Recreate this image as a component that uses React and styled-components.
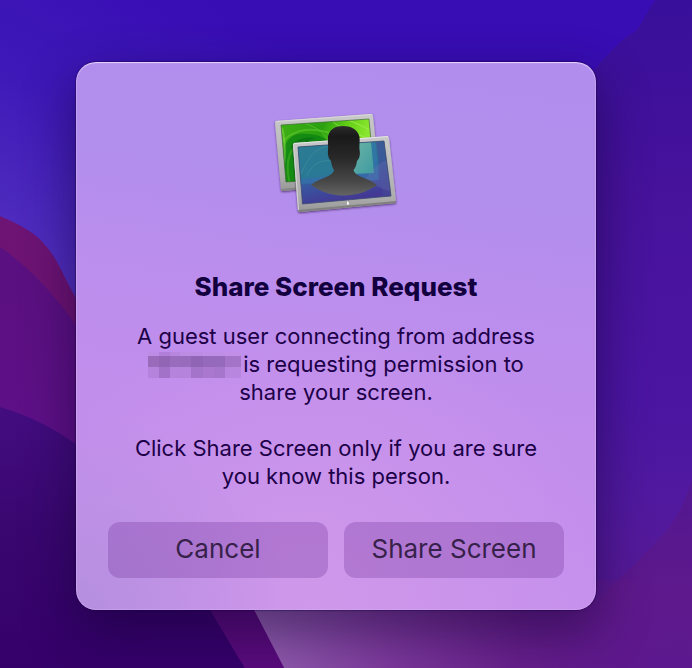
import React from 'react'
import styled, { createGlobalStyle } from 'styled-components'

const GlobalStyle = createGlobalStyle`
  * {
    box-sizing: border-box;
  }
  body {
    margin: 0;
    background: #35006a;
    font-family: Inter, 'Liberation Sans', sans-serif;
  }
`

const Desktop = styled.main`
  min-height: 100vh;
  padding: 62px 96px 58px 76px;
  position: relative;
  overflow: hidden;
`

const WallpaperSvg = styled.svg`
  position: absolute;
  inset: 0;
  width: 100%;
  height: 100%;
`

const Dialog = styled.section`
  position: relative;
  max-width: 520px;
  margin: 0 auto;
  padding: 32px;
  display: flex;
  flex-direction: column;
  align-items: center;
  border-radius: 20px;
  color: #1c0048;
  text-align: center;
  background:
    radial-gradient(circle at 0 100%, #b58fe0 0, #b58fe000 210px),
    radial-gradient(circle at 45% 100%, #cf98ea 0, #cf98ea00 300px),
    linear-gradient(188deg, #b18eed 0%, #b28eed 25%, #bb8eed 42%, #c28eec 65%, #c791ed 100%);
  box-shadow:
    inset 0 1px 1px #e6d4fa,
    inset 0 0 1px 1px #d3aff580,
    0 0 1px 1px #16003a60,
    0 20px 50px 4px #1000307a;
`

const ScreensIcon = styled.svg`
  width: 128px;
  height: 128px;
  margin-bottom: 49px;
`

const Title = styled.h1`
  margin: 0 0 19px;
  font-size: 26px;
  line-height: 32px;
  font-weight: 800;
  color: #12003f;
`

const Message = styled.p`
  max-width: 416px;
  margin: 0 0 28px;
  font-size: 22px;
  line-height: 28px;
`

const LastMessage = styled(Message)`
  margin-bottom: 32px;
`

const MosaicSvg = styled.svg`
  width: 93px;
  height: 28px;
  margin-right: 2px;
  vertical-align: top;
`

const Actions = styled.div`
  width: 100%;
  display: grid;
  grid-template-columns: 1fr 1fr;
  gap: 16px;
`

const Button = styled.button`
  height: 56px;
  padding: 0 0 2px;
  border: 0;
  border-radius: 12px;
  background: #6d2b9447;
  color: #37214a;
  font-family: inherit;
  font-size: 26px;
  line-height: 32px;
  cursor: pointer;
`

function Wallpaper() {
  return (
    <WallpaperSvg viewBox="0 0 692 668" preserveAspectRatio="none" aria-hidden="true">
      <defs>
        <linearGradient id="sky" x1="0.3" y1="0" x2="0" y2="0.5">
          <stop offset="0" stopColor="#380db4" />
          <stop offset="0.4" stopColor="#3e18b8" />
          <stop offset="1" stopColor="#5a3ac2" />
        </linearGradient>
        <linearGradient id="right" x1="0" y1="0" x2="0" y2="1">
          <stop offset="0" stopColor="#380f9a" />
          <stop offset="0.3" stopColor="#47129c" />
          <stop offset="0.6" stopColor="#4b15a2" />
          <stop offset="0.75" stopColor="#51199f" />
          <stop offset="1" stopColor="#5c1a90" />
        </linearGradient>
        <linearGradient id="curve" x1="0" y1="0" x2="0" y2="1">
          <stop offset="0" stopColor="#53168a" stopOpacity="0.7" />
          <stop offset="0.6" stopColor="#5f198c" stopOpacity="0.9" />
          <stop offset="1" stopColor="#5c188e" />
        </linearGradient>
        <linearGradient id="hillBack" x1="0" y1="0" x2="0" y2="1">
          <stop offset="0" stopColor="#6d1474" />
          <stop offset="1" stopColor="#701070" />
        </linearGradient>
        <linearGradient id="hillMid" x1="0" y1="0" x2="0" y2="1">
          <stop offset="0" stopColor="#5a1080" />
          <stop offset="0.5" stopColor="#5f1088" />
          <stop offset="1" stopColor="#68107c" />
        </linearGradient>
        <linearGradient id="hillFront" x1="0" y1="0" x2="0" y2="1">
          <stop offset="0" stopColor="#430d80" />
          <stop offset="0.5" stopColor="#39066f" />
          <stop offset="1" stopColor="#35006a" />
        </linearGradient>
        <linearGradient id="slope" gradientUnits="userSpaceOnUse" x1="254" y1="0" x2="692" y2="0">
          <stop offset="0" stopColor="#9360b0" />
          <stop offset="0.3" stopColor="#7d3a9c" />
          <stop offset="0.6" stopColor="#68208a" stopOpacity="0.9" />
          <stop offset="0.85" stopColor="#62198a" stopOpacity="0.3" />
          <stop offset="1" stopColor="#58178f" stopOpacity="0" />
        </linearGradient>
      </defs>
      <rect width="692" height="668" fill="url(#sky)" />
      <path d="M656 0C648 9 643 22 636 31C621 39 609 53 596 68L380 300V668H692V0Z" fill="url(#right)" />
      <path d="M692 480C684 505 675 522 663 534C645 556 620 578 596 600L540 600V668H692Z" fill="url(#curve)" />
      <path d="M0 216C21 225 37 234 46 246C59 261 66 282 76 298L240 560L300 668H0Z" fill="url(#hillBack)" />
      <path d="M0 247C28 266 53 293 76 325L210 520L300 668H0Z" fill="url(#hillMid)" />
      <path d="M0 407C28 415 53 428 76 444C145 490 181 561 245 668H0Z" fill="url(#hillFront)" />
      <path d="M240 580H692V668H284L254 610Z" fill="url(#slope)" />
      <path d="M180 540H218L254 610L284 668H245L210 610Z" fill="#590b7c" />
    </WallpaperSvg>
  )
}

function Screens() {
  return (
    <ScreensIcon viewBox="272 94 128 128" aria-hidden="true">
      <defs>
        <linearGradient id="frame" x1="0" y1="0" x2="0" y2="1">
          <stop offset="0" stopColor="#c9c9c9" />
          <stop offset="0.8" stopColor="#adadad" />
          <stop offset="1" stopColor="#979797" />
        </linearGradient>
        <linearGradient id="green" x1="0" y1="0" x2="1" y2="0.2">
          <stop offset="0" stopColor="#3fb014" />
          <stop offset="0.45" stopColor="#2aa010" />
          <stop offset="0.7" stopColor="#62cf16" />
          <stop offset="1" stopColor="#94ec35" />
        </linearGradient>
        <linearGradient id="blue" x1="0" y1="0" x2="0.3" y2="1">
          <stop offset="0" stopColor="#377c91" />
          <stop offset="0.5" stopColor="#28739a" />
          <stop offset="0.7" stopColor="#39559f" />
          <stop offset="1" stopColor="#433895" />
        </linearGradient>
        <linearGradient id="teal" x1="0" y1="0" x2="1" y2="1">
          <stop offset="0" stopColor="#6bb5a5" />
          <stop offset="1" stopColor="#409aa1" />
        </linearGradient>
        <linearGradient id="person" x1="0" y1="0" x2="0" y2="1">
          <stop offset="0" stopColor="#2b2b2b" />
          <stop offset="0.15" stopColor="#191919" />
          <stop offset="0.45" stopColor="#282828" />
          <stop offset="0.8" stopColor="#484848" />
          <stop offset="1" stopColor="#646464" />
        </linearGradient>
        <clipPath id="greenClip">
          <path d="M281 125L369 119L374 176L286 182Z" />
        </clipPath>
        <filter id="drop" x="-10%" y="-10%" width="120%" height="125%">
          <feDropShadow dx="0" dy="1" stdDeviation="1" floodColor="#1b0636" floodOpacity="0.6" />
        </filter>
      </defs>

      <g filter="url(#drop)">
        <path d="M276 121L371 114Q373 114 373 116L380 182L282 191Q281 191 281 189L275 123Q275 121 276 121Z" fill="url(#frame)" />
        <path d="M281 189L380 180V182L282 191Z" fill="#858585" />
        <path d="M276 121.500L372 114.500" stroke="#d9d9d9" fill="none" />
      </g>
      <path d="M281 125L369 119L374 176L286 182Z" fill="url(#green)" />
      <g clipPath="url(#greenClip)" fill="none">
        <path d="M283 160C282 139 294 131 309 134C321 135 328 139 331 144L327 183H285Z" fill="#0b8213" opacity="0.75" />
        <path d="M291 150C293 140 303 136 316 138C307 141 300 145 298 158Z" fill="#076b12" opacity="0.6" />
        <path d="M290 185C284 160 290 144 305 142" stroke="#4db827" strokeWidth="2" opacity="0.5" />
        <path d="M281 143C292 131 305 126 330 133" stroke="#6fd23a" strokeWidth="2" opacity="0.45" />
        <path d="M304 123C318 128 327 134 330 146" stroke="#69c93b" opacity="0.6" />
        <path d="M331 119C334 124 340 128 370 139M337 117C348 119 358 124 370 130" stroke="#b3f367" opacity="0.6" />
        <path d="M281 183C287 155 285 139 282 128" stroke="#8fdf4c" strokeWidth="2" opacity="0.5" />
      </g>
      <path d="M281 125L369 119L374 176L286 182Z" fill="none" stroke="#42683d" strokeWidth="0.700" />

      <g filter="url(#drop)">
        <path d="M294 143L387 136.500Q389 136 389 138L396 201Q396 203 394 203L300 212Q298 212 298 210L293 145Q293 143 294 143Z" fill="url(#frame)" />
        <path d="M298 210L396 201V203L299 212Z" fill="#808080" />
        <path d="M294 143.500L388 136.500" stroke="#e6e6e6" fill="none" />
        <path d="M293.500 144L298.500 210" stroke="#d6d6d6" fill="none" />
      </g>
      <path d="M298 147L384 141L391 196L302.500 204Z" fill="url(#blue)" />
      <path d="M298 147L375 142L379 180L301 184Z" fill="#3578ae" opacity="0.55" />
      <path d="M298 147L371 142L374 172L301 179Z" fill="#277e88" opacity="0.55" />
      <path d="M351 143.500L371 142L374 173L352 174Z" fill="url(#teal)" />
      <path d="M376 142L384 141L391 196L383 197Z" fill="#454a98" opacity="0.6" />
      <path d="M301 174C311 151 318 148 330 146M307 175C314 162 321 160 333 161" stroke="#53a1a5" fill="none" opacity="0.35" />
      <path d="M364 181C371 170 378 163 387 160L391 192Z" fill="#8088c0" opacity="0.2" />
      <path d="M298 147L384 141L391 196L302.500 204Z" fill="none" stroke="#3a4a70" strokeWidth="0.800" />

      <path
        d="M343 126C336 126 329 129 328 137C327.500 142 328.500 146 328 150C327.500 154 328.500 159 331 161C331.500 165 332.500 168 334 170C333 177 319 178 311 185C322 193 333 195.500 344 195.500C356 195.500 367 192 377 185C369 178 355 177 353.500 170C355.500 168 356.500 165 357 161C359.500 159 360.500 154 359.500 150C359 146 360 142 359.500 137C358 129 350 126 343 126Z"
        fill="url(#person)"
      />
      <path d="M348 201C346.500 201 346.500 205 348 205C349.500 205 349.500 202 348 202Z" fill="#f4f4f4" />
    </ScreensIcon>
  )
}

const mosaicRows = [
  { y: 2, height: 4, fills: ['#bd8de5', '#b17fd9', '#b787df', '#bc8ce3', '#bc8ce4', '#bf8fe7', '#bf8fe7', '#c18fe8'] },
  { y: 6, height: 11, fills: ['#9a6abb', '#9265b5', '#9a6cbe', '#996bbd', '#9065b6', '#956abd', '#956abd', '#a374c7'] },
  { y: 17, height: 11, fills: ['#b582dc', '#a272c9', '#b683dc', '#b683dc', '#a474cb', '#aa78cf', '#a675cc', '#b986df'] },
]
const mosaicEdges = [0, 11, 22, 32, 43, 55, 66, 77, 93]

function Mosaic() {
  return (
    <MosaicSvg viewBox="0 0 93 28" shapeRendering="crispEdges" aria-hidden="true">
      {mosaicRows.map(row =>
        row.fills.map((fill, i) => (
          <rect
            key={`${row.y}-${i}`}
            x={mosaicEdges[i]}
            y={row.y}
            width={mosaicEdges[i + 1] - mosaicEdges[i]}
            height={row.height}
            fill={fill}
          />
        ))
      )}
    </MosaicSvg>
  )
}

export default function App() {
  return (
    <Desktop>
      <GlobalStyle />
      <Wallpaper />
      <Dialog role="dialog" aria-labelledby="title">
        <Screens />
        <Title id="title">Share Screen Request</Title>
        <Message>
          A guest user connecting from address <Mosaic />is requesting permission to share your screen.
        </Message>
        <LastMessage>
          Click Share Screen only if you are sure you know this person.
        </LastMessage>
        <Actions>
          <Button type="button">Cancel</Button>
          <Button type="button">Share Screen</Button>
        </Actions>
      </Dialog>
    </Desktop>
  )
}
